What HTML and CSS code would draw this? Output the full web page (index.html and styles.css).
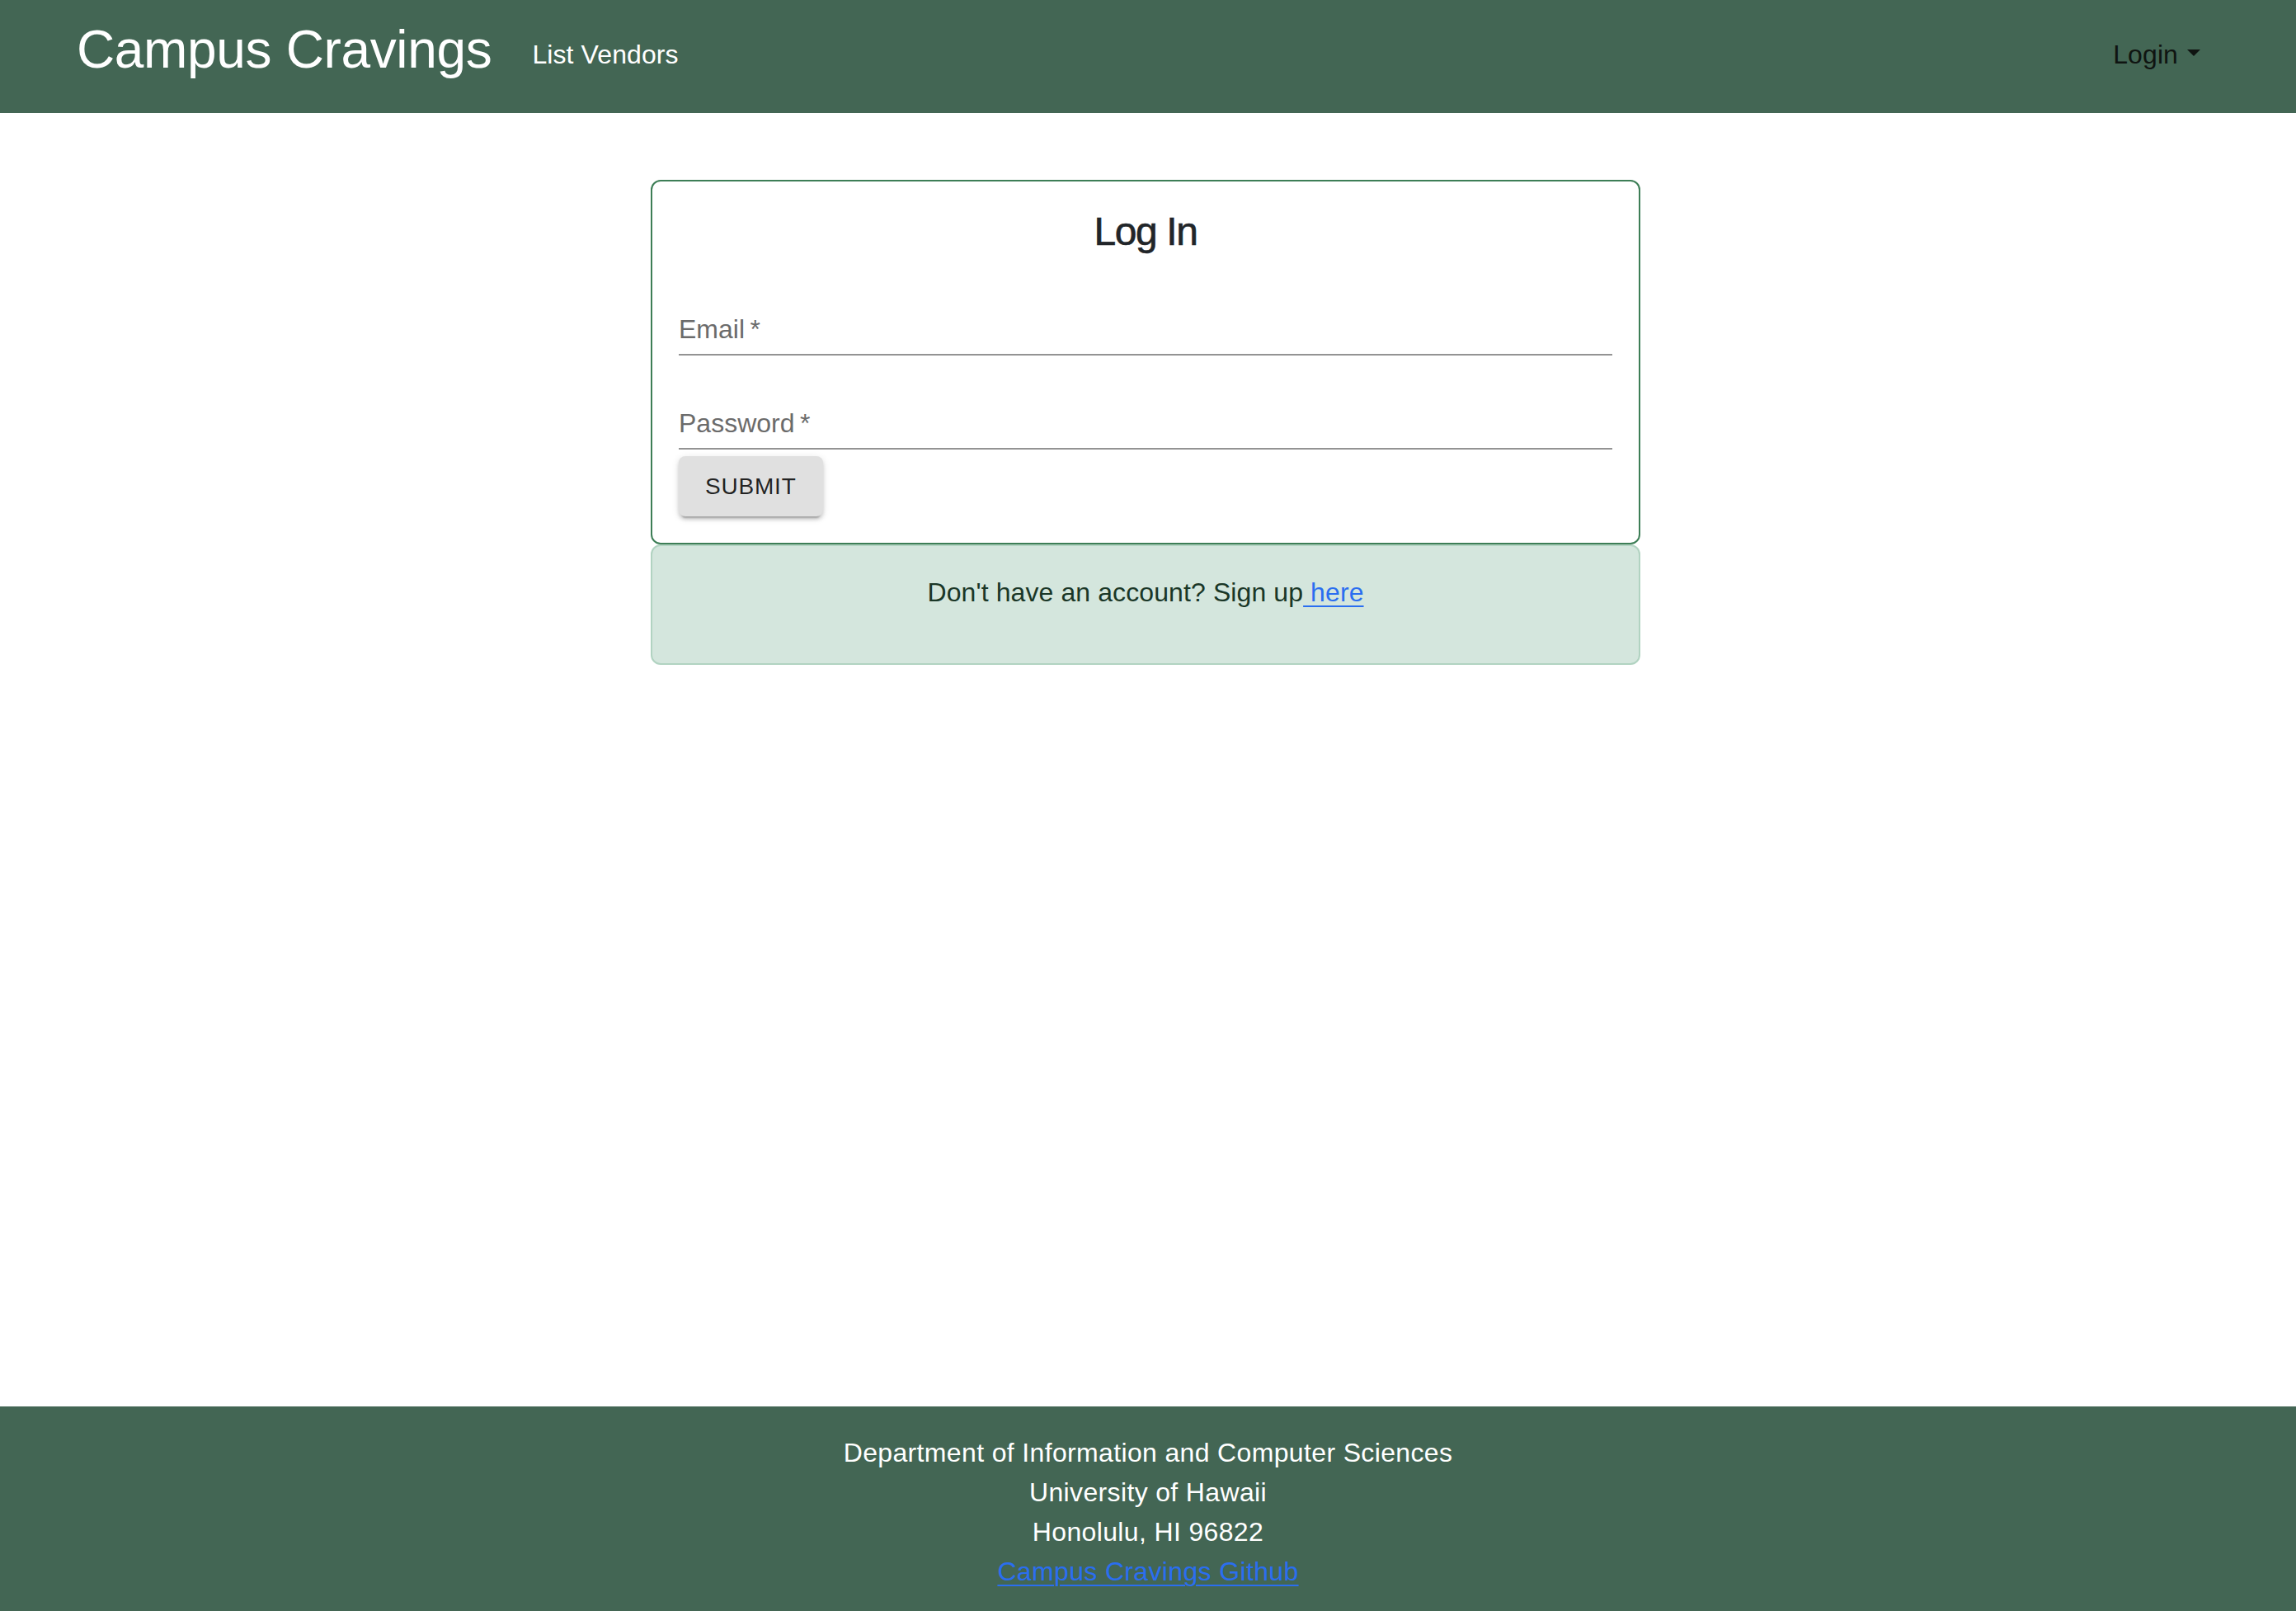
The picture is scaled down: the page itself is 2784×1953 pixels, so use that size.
FILE: index.html
```html
<!DOCTYPE html>
<html lang="en">
<head>
<meta charset="utf-8">
<title>Campus Cravings</title>
<link rel="stylesheet" href="styles.css">
</head>
<body>
<nav class="navbar">
  <a class="brand" href="#">Campus Cravings</a>
  <a class="nav-link nav-link-light" href="#">List Vendors</a>
  <div class="spacer"></div>
  <a class="nav-link nav-link-dark" href="#">Login<span class="caret"></span></a>
</nav>
<main class="main">
  <div class="auth">
    <div class="card">
      <h2 class="card-title">Log In</h2>
      <div class="field field-first"><span class="field-label">Email&thinsp;*</span></div>
      <div class="field field-second"><span class="field-label">Password&thinsp;*</span></div>
      <button class="submit" type="button">Submit</button>
    </div>
    <div class="alert">
      <p class="alert-text">Don't have an account? Sign up<a class="link" href="#"> here</a></p>
    </div>
  </div>
</main>
<footer class="footer">
  <div class="footer-line">Department of Information and Computer Sciences</div>
  <div class="footer-line">University of Hawaii</div>
  <div class="footer-line">Honolulu, HI 96822</div>
  <div class="footer-line"><a class="link" href="#">Campus Cravings Github</a></div>
</footer>
</body>
</html>
```

FILE: styles.css
```css
html, body {
  margin: 0;
  padding: 0;
}

body {
  font-family: "Liberation Sans", Arial, sans-serif;
  color: #212529;
  background: #ffffff;
  min-height: 100vh;
  display: flex;
  flex-direction: column;
  overflow: hidden;
}

a {
  text-decoration: none;
}

.navbar {
  height: 137px;
  background: #436654;
  display: flex;
  align-items: flex-start;
  padding: 0 116px 0 93px;
  box-sizing: border-box;
}

.brand {
  font-size: 64px;
  line-height: 120px;
  letter-spacing: -0.35px;
  color: #ffffff;
  margin-right: 49px;
}

.nav-link {
  font-size: 32px;
  line-height: 132px;
  letter-spacing: 0.1px;
}

.nav-link-light {
  color: #ffffff;
}

.nav-link-dark {
  color: #0f1411;
}

.spacer {
  flex: 1;
}

.caret {
  display: inline-block;
  width: 0;
  height: 0;
  margin-left: 11px;
  vertical-align: 9px;
  border-top: 8px solid #0f1411;
  border-left: 8px solid transparent;
  border-right: 8px solid transparent;
}

.main {
  flex: 1;
  display: flex;
  justify-content: center;
  align-items: flex-start;
  padding-right: 6px;
}

.auth {
  width: 1200px;
  margin-top: 81px;
}

.card {
  border: 2px solid #3d7e56;
  border-radius: 12px;
  padding: 32px;
  display: flex;
  flex-direction: column;
  align-items: stretch;
}

.card-title {
  margin: 0;
  font-size: 48px;
  line-height: 58px;
  font-weight: 500;
  letter-spacing: -1.4px;
  text-align: center;
  color: #212529;
  -webkit-text-stroke: 0.6px #212529;
}

.field {
  border-bottom: 2px solid #939393;
  padding-bottom: 7px;
}

.field-first {
  padding-top: 66px;
}

.field-second {
  padding-top: 59px;
}

.field-label {
  display: block;
  font-size: 32px;
  line-height: 46px;
  color: #6b6b6b;
}

.submit {
  align-self: flex-start;
  margin-top: 8px;
  border: none;
  border-radius: 8px;
  background: #e0e0e0;
  color: rgba(0, 0, 0, 0.87);
  font-family: "Liberation Sans", Arial, sans-serif;
  font-size: 28px;
  line-height: 49px;
  letter-spacing: 0.8px;
  text-transform: uppercase;
  padding: 12px 32px;
  box-shadow: 0 6px 2px -4px rgba(0, 0, 0, 0.2), 0 4px 4px 0 rgba(0, 0, 0, 0.14), 0 2px 10px 0 rgba(0, 0, 0, 0.12);
}

.alert {
  border: 2px solid #b1d3c1;
  border-radius: 12px;
  background: #d4e6dd;
  padding: 32px;
}

.alert-text {
  margin: 0 0 30px;
  font-size: 32px;
  line-height: 48px;
  letter-spacing: 0.1px;
  text-align: center;
  color: #1a3727;
}

.link {
  color: #2a6ef0;
  text-decoration: underline;
  text-decoration-thickness: 2px;
  text-underline-offset: 5px;
}

.footer {
  background: #436654;
  color: #ffffff;
  text-align: center;
  padding: 32px 0 24px;
  font-size: 32px;
  line-height: 48px;
  letter-spacing: 0.35px;
}
```
